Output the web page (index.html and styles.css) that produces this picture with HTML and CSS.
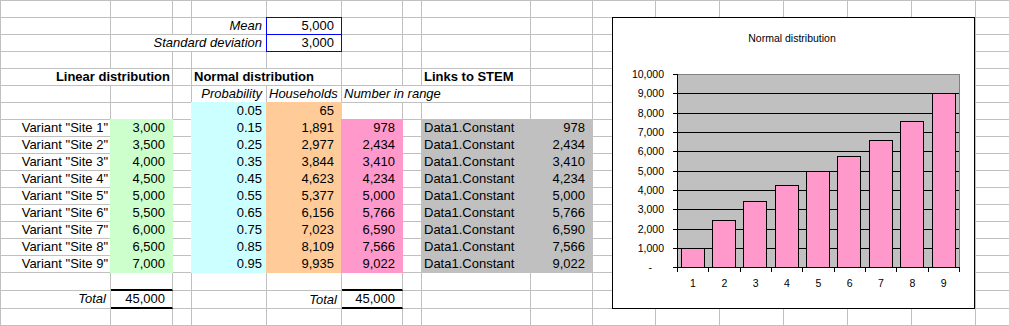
FILE: index.html
```html
<!DOCTYPE html>
<html>
<head>
<meta charset="utf-8">
<title>Normal distribution</title>
<link rel="stylesheet" href="styles.css">
</head>
<body>
<div class="sheet">
  <!-- row 1 -->
  <div></div><div></div><div></div><div></div><div></div><div></div><div></div><div></div><div></div><div></div><div></div><div></div><div></div><div></div><div></div><div></div>
  <!-- row 2 -->
  <div></div><div></div><div></div><div class="it r">Mean</div><div class="num box">5,000</div><div></div><div></div><div></div><div></div><div></div><div></div><div></div><div></div><div></div><div></div><div></div>
  <!-- row 3 -->
  <div></div><div class="it r span3">Standard deviation</div><div class="num box">3,000</div><div></div><div></div><div></div><div></div><div></div><div></div><div></div><div></div><div></div><div></div><div></div>
  <!-- row 4 -->
  <div></div><div></div><div></div><div></div><div></div><div></div><div></div><div></div><div></div><div></div><div></div><div></div><div></div><div></div><div></div><div></div>
  <!-- row 5 -->
  <div class="bd r span2">Linear distribution</div><div></div><div class="bd span2">Normal distribution</div><div></div><div></div><div class="bd">Links to STEM</div><div></div><div></div><div></div><div></div><div></div><div></div><div></div><div></div>
  <!-- row 6 -->
  <div></div><div></div><div></div><div class="it r">Probability</div><div class="it r">Households</div><div class="it span3">Number in range</div><div></div><div></div><div></div><div></div><div></div><div></div><div></div><div></div>
  <!-- row 7 -->
  <div></div><div></div><div></div><div class="gen fill cyan">0.05</div><div class="num fill tan">65</div><div></div><div></div><div></div><div></div><div></div><div></div><div></div><div></div><div></div><div></div><div></div>
  <!-- site rows -->
  <div class="r">Variant "Site 1"</div><div class="num fill green">3,000</div><div></div><div class="gen fill cyan">0.15</div><div class="num fill tan">1,891</div><div class="num fill rose">978</div><div></div><div class="fill gray">Data1.Constant</div><div class="num fill gray">978</div><div></div><div></div><div></div><div></div><div></div><div></div><div></div>
  <div class="r">Variant "Site 2"</div><div class="num fill green">3,500</div><div></div><div class="gen fill cyan">0.25</div><div class="num fill tan">2,977</div><div class="num fill rose">2,434</div><div></div><div class="fill gray">Data1.Constant</div><div class="num fill gray">2,434</div><div></div><div></div><div></div><div></div><div></div><div></div><div></div>
  <div class="r">Variant "Site 3"</div><div class="num fill green">4,000</div><div></div><div class="gen fill cyan">0.35</div><div class="num fill tan">3,844</div><div class="num fill rose">3,410</div><div></div><div class="fill gray">Data1.Constant</div><div class="num fill gray">3,410</div><div></div><div></div><div></div><div></div><div></div><div></div><div></div>
  <div class="r">Variant "Site 4"</div><div class="num fill green">4,500</div><div></div><div class="gen fill cyan">0.45</div><div class="num fill tan">4,623</div><div class="num fill rose">4,234</div><div></div><div class="fill gray">Data1.Constant</div><div class="num fill gray">4,234</div><div></div><div></div><div></div><div></div><div></div><div></div><div></div>
  <div class="r">Variant "Site 5"</div><div class="num fill green">5,000</div><div></div><div class="gen fill cyan">0.55</div><div class="num fill tan">5,377</div><div class="num fill rose">5,000</div><div></div><div class="fill gray">Data1.Constant</div><div class="num fill gray">5,000</div><div></div><div></div><div></div><div></div><div></div><div></div><div></div>
  <div class="r">Variant "Site 6"</div><div class="num fill green">5,500</div><div></div><div class="gen fill cyan">0.65</div><div class="num fill tan">6,156</div><div class="num fill rose">5,766</div><div></div><div class="fill gray">Data1.Constant</div><div class="num fill gray">5,766</div><div></div><div></div><div></div><div></div><div></div><div></div><div></div>
  <div class="r">Variant "Site 7"</div><div class="num fill green">6,000</div><div></div><div class="gen fill cyan">0.75</div><div class="num fill tan">7,023</div><div class="num fill rose">6,590</div><div></div><div class="fill gray">Data1.Constant</div><div class="num fill gray">6,590</div><div></div><div></div><div></div><div></div><div></div><div></div><div></div>
  <div class="r">Variant "Site 8"</div><div class="num fill green">6,500</div><div></div><div class="gen fill cyan">0.85</div><div class="num fill tan">8,109</div><div class="num fill rose">7,566</div><div></div><div class="fill gray">Data1.Constant</div><div class="num fill gray">7,566</div><div></div><div></div><div></div><div></div><div></div><div></div><div></div>
  <div class="r">Variant "Site 9"</div><div class="num fill green">7,000</div><div></div><div class="gen fill cyan">0.95</div><div class="num fill tan">9,935</div><div class="num fill rose">9,022</div><div></div><div class="fill gray">Data1.Constant</div><div class="num fill gray">9,022</div><div></div><div></div><div></div><div></div><div></div><div></div><div></div>
  <!-- row 17 -->
  <div></div><div class="above-total"></div><div></div><div></div><div></div><div class="above-total"></div><div></div><div></div><div></div><div></div><div></div><div></div><div></div><div></div><div></div><div></div>
  <!-- row 18 totals -->
  <div class="it r">Total</div><div class="num total">45,000</div><div></div><div></div><div class="it r">Total</div><div class="num total">45,000</div><div></div><div></div><div></div><div></div><div></div><div></div><div></div><div></div><div></div><div></div>
  <!-- row 19 -->
  <div></div><div></div><div></div><div></div><div></div><div></div><div></div><div></div><div></div><div></div><div></div><div></div><div></div><div></div><div></div><div></div>
</div>

<div class="chart">
  <svg width="363" height="292" viewBox="0 0 363 292" xmlns="http://www.w3.org/2000/svg">
    <rect x="0.5" y="0.5" width="362" height="291" fill="#fff" stroke="#000"/>
    <text class="title" x="180" y="24.5" text-anchor="middle">Normal distribution</text>
    <rect x="65.5" y="57.5" width="282" height="193" fill="#c0c0c0" stroke="#808080"/>
    <path d="M66 76.5H347M66 96.5H347M66 115.5H347M66 134.5H347M66 154.5H347M66 173.5H347M66 192.5H347M66 212.5H347M66 231.5H347" stroke="#000" fill="none"/>
    <g fill="#ff99cc" stroke="#000">
      <rect x="69.5" y="231.5" width="23" height="19"/>
      <rect x="100.5" y="203.5" width="23" height="47"/>
      <rect x="131.5" y="184.5" width="23" height="66"/>
      <rect x="163.5" y="168.5" width="23" height="82"/>
      <rect x="194.5" y="154.5" width="23" height="96"/>
      <rect x="225.5" y="139.5" width="23" height="111"/>
      <rect x="257.5" y="123.5" width="23" height="127"/>
      <rect x="288.5" y="104.5" width="23" height="146"/>
      <rect x="320.5" y="76.5" width="23" height="174"/>
    </g>
    <path d="M65.5 57V251M65 250.5H348" stroke="#000" fill="none"/>
    <path d="M61 57.5H65M61 76.5H65M61 96.5H65M61 115.5H65M61 134.5H65M61 154.5H65M61 173.5H65M61 192.5H65M61 212.5H65M61 231.5H65M61 250.5H65" stroke="#000" fill="none"/>
    <path d="M65.5 251V255M96.5 251V255M128.5 251V255M159.5 251V255M190.5 251V255M222.5 251V255M253.5 251V255M284.5 251V255M316.5 251V255M347.5 251V255" stroke="#000" fill="none"/>
    <g class="lbl" text-anchor="end">
      <text x="52" y="61">10,000</text>
      <text x="52" y="80">9,000</text>
      <text x="52" y="100">8,000</text>
      <text x="52" y="119">7,000</text>
      <text x="52" y="138">6,000</text>
      <text x="52" y="158">5,000</text>
      <text x="52" y="177">4,000</text>
      <text x="52" y="196">3,000</text>
      <text x="52" y="216">2,000</text>
      <text x="52" y="235">1,000</text>
      <text x="40" y="254">-</text>
    </g>
    <g class="lbl" text-anchor="middle">
      <text x="81" y="270">1</text>
      <text x="112.3" y="270">2</text>
      <text x="143.6" y="270">3</text>
      <text x="175" y="270">4</text>
      <text x="206.3" y="270">5</text>
      <text x="237.6" y="270">6</text>
      <text x="269" y="270">7</text>
      <text x="300.3" y="270">8</text>
      <text x="331.6" y="270">9</text>
    </g>
  </svg>
</div>
</body>
</html>
```

FILE: styles.css
```css
html, body {
  margin: 0;
  padding: 0;
  background: #fff;
}
body {
  width: 1009px;
  height: 326px;
  overflow: hidden;
  position: relative;
  font-family: "Liberation Sans", Arial, sans-serif;
  font-size: 13px;
  color: #000;
}

.sheet {
  display: grid;
  grid-template-columns: 110px 62px 19px 75px 75px 61px 19px 109px 62px 63px 64px 64px 64px 64px 64px 34px;
  grid-template-rows: repeat(16, 17px) 18px 18px 17px;
  width: max-content;
  border-top: 1px solid #c0c0c0;
  border-left: 1px solid #c0c0c0;
}
.sheet > div {
  box-sizing: border-box;
  border-right: 1px solid #c0c0c0;
  border-bottom: 1px solid #c0c0c0;
  padding: 0 2px;
  line-height: 16px;
  white-space: nowrap;
  overflow: visible;
}

.r { text-align: right; }
.it { font-style: italic; padding-right: 4px !important; }
.bd { font-weight: bold; }
.num { text-align: right; padding-right: 7px !important; }
.gen { text-align: right; padding-right: 4px !important; }
.span2 { grid-column: span 2; }
.span3 { grid-column: span 3; }

.fill {
  background: var(--f);
  border-color: var(--f) !important;
  box-shadow: -1px 0 0 var(--f), 0 -1px 0 var(--f), -1px -1px 0 var(--f);
}
.green { --f: #ccffcc; }
.cyan { --f: #ccffff; }
.tan { --f: #ffcc99; }
.rose { --f: #ff99cc; }
.gray { --f: #c0c0c0; }

.box {
  border-color: #0000ff !important;
  box-shadow: -1px 0 0 #0000ff, 0 -1px 0 #0000ff, -1px -1px 0 #0000ff;
}

.above-total,
.total {
  border-bottom: 2px solid #000 !important;
}
.total,
.sheet > .total ~ .it {
  line-height: 18px;
}

.chart {
  position: absolute;
  left: 612px;
  top: 17px;
  width: 363px;
  height: 292px;
}
.chart svg {
  display: block;
}
.chart text {
  font-family: "Liberation Sans", Arial, sans-serif;
  font-size: 10.5px;
  fill: #000;
}
```
